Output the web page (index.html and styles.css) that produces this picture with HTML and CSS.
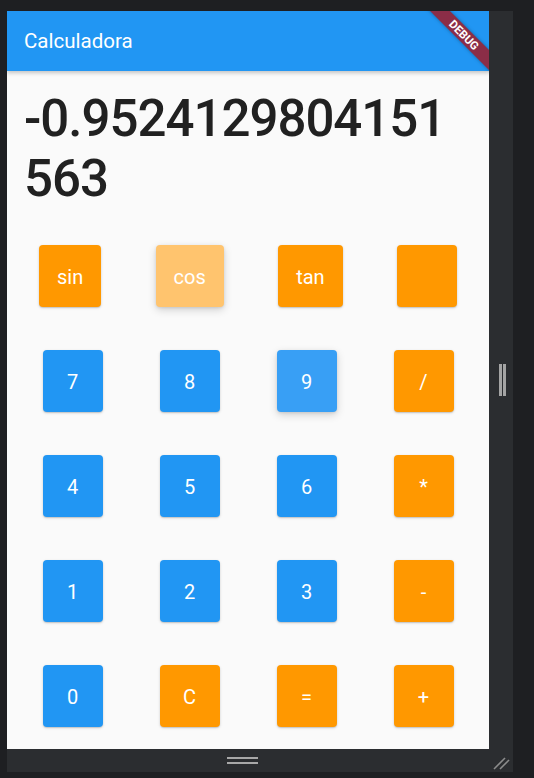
FILE: index.html
```html
<!DOCTYPE html>
<html lang="es">
<head>
<meta charset="utf-8">
<title>Calculadora</title>
<link rel="stylesheet" href="styles.css">
</head>
<body>
<div class="frame">
  <div class="app">
    <header class="appbar">
      <span class="title">Calculadora</span>
      <div class="banner">DEBUG</div>
    </header>
    <main class="body">
      <div class="display">-0.9524129804151563</div>
      <div class="fn-row">
        <button class="btn orange">sin</button>
        <button class="btn orange hover">cos</button>
        <button class="btn orange">tan</button>
        <button class="btn orange"></button>
      </div>
      <div class="keys">
        <button class="btn blue">7</button>
        <button class="btn blue">8</button>
        <button class="btn blue hover">9</button>
        <button class="btn orange">/</button>
        <button class="btn blue">4</button>
        <button class="btn blue">5</button>
        <button class="btn blue">6</button>
        <button class="btn orange">*</button>
        <button class="btn blue">1</button>
        <button class="btn blue">2</button>
        <button class="btn blue">3</button>
        <button class="btn orange">-</button>
        <button class="btn blue">0</button>
        <button class="btn orange">C</button>
        <button class="btn orange">=</button>
        <button class="btn orange">+</button>
      </div>
    </main>
  </div>
  <div class="side"><span class="vbar"></span><span class="vbar"></span></div>
  <div class="bottom"><div class="hhandle"><span class="hbar"></span><span class="hbar"></span></div></div>
  <div class="corner">
    <svg width="24" height="23" viewBox="0 0 24 23">
      <line x1="5" y1="20" x2="16" y2="9" stroke="#8c8c8c" stroke-width="1.6"/>
      <line x1="11" y1="20" x2="20" y2="11" stroke="#8c8c8c" stroke-width="1.6"/>
    </svg>
  </div>
</div>
</body>
</html>
```
FILE: styles.css
```css
html, body {
  margin: 0;
  padding: 0;
  background: #1e1f22;
  width: 534px;
  height: 778px;
  overflow: hidden;
  font-family: Roboto, "Noto Sans", sans-serif;
}

.frame {
  margin: 11px 0 0 7px;
  width: 506px;
  height: 761px;
  background: #2b2d30;
  display: grid;
  grid-template-columns: 482px 24px;
  grid-template-rows: 738px 23px;
}

.app {
  position: relative;
  overflow: hidden;
  background: #fafafa;
  display: flex;
  flex-direction: column;
}

.appbar {
  height: 60px;
  flex: none;
  background: #2196f3;
  display: flex;
  align-items: center;
  padding-left: 17px;
  box-shadow: 0 2px 4px rgba(0, 0, 0, 0.22);
  position: relative;
  z-index: 1;
}

.title {
  color: #fff;
  font-size: 20.5px;
  font-weight: 400;
}

.banner {
  position: absolute;
  left: 397px;
  top: 17px;
  width: 120px;
  height: 14px;
  transform: rotate(45deg);
  background: #8b2d47;
  color: #fff;
  font-size: 11.5px;
  font-weight: 700;
  line-height: 14px;
  text-align: center;
  box-shadow: 0 0 4px rgba(0, 0, 0, 0.35);
}

.body {
  flex: 1;
  background: #fafafa;
}

.display {
  padding: 18px 17px 0 17px;
  font-size: 51px;
  line-height: 60px;
  letter-spacing: -1px;
  color: #212121;
  font-weight: 500;
  word-break: break-all;
}

.fn-row {
  margin-top: 36px;
  display: flex;
  justify-content: space-between;
  padding: 0 32px;
}

.keys {
  margin-top: 43px;
  padding: 0 7px;
  display: grid;
  grid-template-columns: repeat(4, 1fr);
  row-gap: 43px;
  justify-items: center;
}

.btn {
  height: 62px;
  min-width: 60px;
  padding: 2px 18px 0 18px;
  border: none;
  border-radius: 4px;
  color: #fff;
  font-family: Roboto, "Noto Sans", sans-serif;
  font-size: 20px;
  font-weight: 400;
  display: flex;
  align-items: center;
  justify-content: center;
  box-shadow: 0 1px 3px rgba(0, 0, 0, 0.16), 0 1px 1px rgba(0, 0, 0, 0.1);
}

.orange { background: #ff9800; }
.blue { background: #2196f3; }

.orange.hover {
  background: #ffc46e;
  box-shadow: 0 3px 8px rgba(0, 0, 0, 0.16), 0 1px 3px rgba(0, 0, 0, 0.1);
}

.blue.hover {
  background: #389ff5;
  box-shadow: 0 3px 8px rgba(0, 0, 0, 0.16), 0 1px 3px rgba(0, 0, 0, 0.1);
}

.side {
  display: flex;
  align-items: center;
  justify-content: center;
  gap: 1px;
  padding-left: 2px;
}

.vbar {
  width: 3px;
  height: 32px;
  background: #a4a4a4;
}

.bottom {
  display: flex;
  align-items: center;
  justify-content: center;
  padding-right: 11px;
}

.hhandle {
  display: flex;
  flex-direction: column;
  gap: 3px;
}

.hbar {
  width: 31px;
  height: 2px;
  background: #a8a8a8;
}

.corner {
  display: flex;
}
```
